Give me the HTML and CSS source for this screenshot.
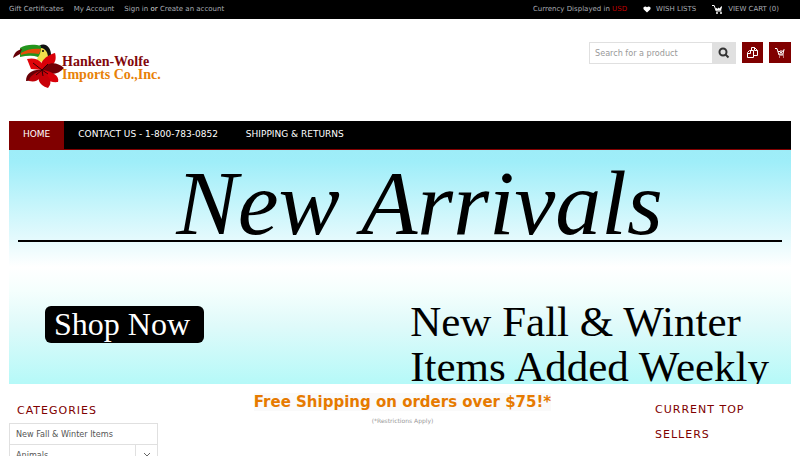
FILE: index.html
```html
<!DOCTYPE html>
<html lang="en">
<head>
<meta charset="utf-8">
<meta name="viewport" content="width=device-width, initial-scale=1">
<title>Hanken-Wolfe Imports Co., Inc.</title>
<link rel="stylesheet" href="styles.css">
</head>
<body>
<div class="topbar">
  <nav class="account">
    <a href="#">Gift Certificates</a>
    <a href="#">My Account</a>
    <span class="sign"><a href="#">Sign in</a> <b>or</b> <a href="#">Create an account</a></span>
  </nav>
  <div class="tools">
    <span>Currency Displayed in <a class="currency" href="#">USD</a></span>
    <a class="tool" href="#"><svg class="heart" viewBox="0 0 8 7"><path d="M4 6.500 .8 3.600C-.6 1.600 1.800-.6 4 1.200c2.200-1.800 4.600.4 3.200 2.400z"/></svg>WISH LISTS</a>
    <a class="tool cart-link" href="#"><svg class="cart" viewBox="0 0 11 10"><path class="wire" d="M0 1.500h2.200l2 5.500H9.500"/><path d="M3.500 4.500 5 4l.5 1 1-1.500 1 1L9.500 2l.5 1-1 3.500H4z"/><circle cx="5" cy="9" r="1"/><circle cx="9" cy="9" r="1"/></svg>VIEW CART (0)</a>
  </div>
</div>
<div class="page">
  <header class="header">
    <a class="logo" href="#">
      <svg class="toucan" viewBox="0 0 52 46">
        <path fill="#111" d="M26 2c6-4 12 1 12 9l-3 2z"/>
        <path fill="#f2df4c" d="M27 4c5-1 8 5 8 9l-3 6-8-3z"/>
        <path fill="#24951d" d="M7 4C13 0 22 0 28 2c0 5-1 9-3 11-6-2-12-1-18 0z"/>
        <path fill="#e54c08" d="M8 9c6-4 13-5 20-4l-2 5c-7-1-12-1-18 1z"/>
        <path fill="#650006" d="M0 14c1-5 4-8 9-9L7 10z"/>
        <circle cx="30" cy="7" r="1"/>
        <path fill="#df050a" d="M29 26 18 25 14 15c9-2 17 2 16 11z"/>
        <path fill="#d90008" d="M29 26c-4-7 3-14 13-17 2 7 0 14-13 17z"/>
        <path fill="#710006" d="M29 26c5-8 14-9 22-2-6 7-15 8-22 2z"/>
        <path fill="#d8000a" d="M29 26c10 1 18 6 16 12-9 1-17-4-16-12z"/>
        <path fill="#c80008" d="M29 26c8 7 11 12 6 18-10-3-12-10-6-18z"/>
        <path fill="#690006" d="M29 26c-9-1-16 3-16 11 9 0 15-3 16-11z"/>
        <path fill="#be0008" d="M29 26c-8 3-13 7-13 11 9 2 13-3 13-11z"/>
        <path fill="none" stroke="#310004" d="m20 19 9 7 6-6M29 26l6 4M29 26l-6 5M29 26l1 6"/>
      </svg>
      <span class="logo-text"><span class="logo-name">Hanken-Wolfe</span><span class="logo-kind">Imports Co.,Inc.</span></span>
    </a>
    <div class="actions">
      <form class="search">
        <input type="search" aria-label="Search for a product" placeholder="Search for a product">
        <button type="submit" aria-label="Search"><svg viewBox="0 0 12 12"><circle cx="5" cy="5" r="3.500"/><path d="m7.500 7.500 3 3"/></svg></button>
      </form>
      <button class="square" type="button" aria-label="Compare"><svg viewBox="0 0 12 12"><path d="M4.500 3V.5h3l3 3v5H7M7.500.5v3h3"/><path d="M.5 5.500l2-2h4v7h-6zM.5 6.500h3v-3"/></svg></button>
      <button class="square" type="button" aria-label="Cart"><svg viewBox="0 0 12 12"><path d="M1 1.500h2l2 6.500h5M4 4.500h2L7 6l3-3.500L9 7H5M7 3v3"/><path d="M5 10h1M9 10h1"/></svg></button>
    </div>
  </header>
  <nav class="menu">
    <a class="current" href="#">HOME</a>
    <a href="#">CONTACT US - 1-800-783-0852</a>
    <a href="#">SHIPPING &amp; RETURNS</a>
  </nav>
  <section class="banner">
    <h1>New Arrivals</h1>
    <div class="offer">
      <a class="shop" href="#">Shop Now</a>
      <p>New Fall &amp; Winter<br>Items Added Weekly</p>
    </div>
  </section>
  <main class="columns">
    <aside class="left">
      <h2>CATEGORIES</h2>
      <ul>
        <li><a href="#">New Fall &amp; Winter Items</a></li>
        <li><a href="#">Animals</a><button type="button" aria-label="Expand Animals"><svg viewBox="0 0 6 4"><path d="m0 0 3 3 3-3"/></svg></button></li>
      </ul>
    </aside>
    <section class="shipping">
      <p class="free"><strong>Free Shipping on orders over $75!*</strong></p>
      <p class="note">(*Restrictions Apply)</p>
    </section>
    <aside class="right"><h2>CURRENT TOP SELLERS</h2></aside>
  </main>
</div>
</body>
</html>
```
FILE: styles.css
```css
* { box-sizing: border-box; }
body {
  margin: 0;
  background: #fff;
  color: #555;
  font: 8px/12px "DejaVu Sans", sans-serif;
  overflow: hidden;
}
a { color: inherit; text-decoration: none; }
button { border: 0; padding: 0; }
h1, h2, p, ul { margin: 0; padding: 0; font-weight: normal; }
svg { display: block; }

.topbar {
  display: flex;
  justify-content: space-between;
  height: 19px;
  padding: 3px 21px 0 9px;
  background: #000;
  color: #a9adb4;
  font-size: 7px;
}
.account, .tools, .tool { display: flex; }
.account { gap: 10px; }
.account b { color: #ddd; font-weight: normal; }
.tools { gap: 16px; align-items: flex-start; }
.currency { color: #c00000; }
.tool { gap: 5px; align-items: center; height: 12px; }
.heart { width: 8px; height: 7px; fill: #fff; }
.cart { width: 11px; height: 10px; fill: #fff; }
.wire { fill: none; stroke: #fff; }

.page { padding: 0 9px; }
.header {
  display: flex;
  justify-content: space-between;
  align-items: flex-start;
  height: 102px;
  padding-top: 23px;
}
.logo { display: flex; padding: 2px 0 0 4px; }
.toucan { width: 52px; height: 46px; }
.logo-text {
  display: flex;
  flex-direction: column;
  margin-left: -3px;
  padding-top: 11px;
  font: bold 14px/13px "Liberation Serif", serif;
}
.logo-name { color: #82070c; }
.logo-kind { color: #e88108; }
.actions { display: flex; gap: 6px; }
.search { display: flex; height: 22px; }
.search input {
  width: 123px;
  border: 1px solid #e0e0e0;
  border-right: 0;
  border-radius: 0;
  padding: 0 5px;
  background: #fff;
  font: 9px "DejaVu Sans Condensed", "DejaVu Sans", sans-serif;
  appearance: none;
}
.search input::placeholder { color: #999; }
.search button { width: 24px; background: #e0e0e0; }
.search svg { width: 12px; height: 12px; margin: auto; fill: none; stroke: #333; stroke-width: 2; }
.square { width: 21px; height: 21px; background: #800000; }
.square svg { width: 12px; height: 12px; margin: auto; fill: none; stroke: #fff; }
.square + .square { width: 22px; }

.menu {
  display: flex;
  height: 29px;
  border-bottom: 1px solid #800000;
  background: #000;
  color: #fff;
  font: 9px/26px "DejaVu Sans", sans-serif;
}
.menu a { padding: 0 14px; }
.menu .current { background: #800000; }

.banner {
  height: 234px;
  padding: 0 9px;
  overflow: hidden;
  background: linear-gradient(#9eedf8 0%, #9feef9 5%, #e4fafd 38%, #fff 50%, #f5fffd 60%, #dffafa 75%, #b5f9f8 100%);
  color: #000;
  font-family: "Liberation Serif", serif;
}
.banner h1 {
  height: 92px;
  padding-left: 39px;
  border-bottom: 2px solid #000;
  font-size: 92px;
  line-height: 107px;
  font-style: italic;
  text-align: center;
}
.offer {
  display: flex;
  justify-content: space-between;
  align-items: flex-start;
  padding: 57px 13px 0 27px;
}
.shop {
  margin-top: 7px;
  padding: 0 14px 0 9px;
  border-radius: 6px;
  background: #000;
  color: #fff;
  font-size: 32px;
  line-height: 37px;
}
.offer p { font-size: 43px; line-height: 45px; white-space: nowrap; }

.columns { display: grid; grid-template-columns: 149px 1fr 136px; }
h2 { color: #800000; font-size: 11px; line-height: 25px; letter-spacing: 1px; }
.left h2 { padding: 14px 8px 0; }
ul { list-style: none; border: 1px solid #e0e0e0; }
li {
  display: flex;
  justify-content: space-between;
  height: 21px;
  border-bottom: 1px solid #e0e0e0;
  font: 9px/20px "DejaVu Sans Condensed", "DejaVu Sans", sans-serif;
}
li a { padding-left: 6px; }
li button { width: 22px; border-left: 1px solid #e0e0e0; background: #fff; }
li svg { width: 6px; height: 4px; margin: auto; fill: none; stroke: #666; }
.shipping { padding: 8px 8px 0 0; text-align: center; }
.free { color: #e67a00; font-size: 15px; line-height: 20px; }
.free strong { background: #fafafa; }
.note { padding-top: 3px; color: #999; font-size: 6px; }
.right { padding-top: 13px; }
```
